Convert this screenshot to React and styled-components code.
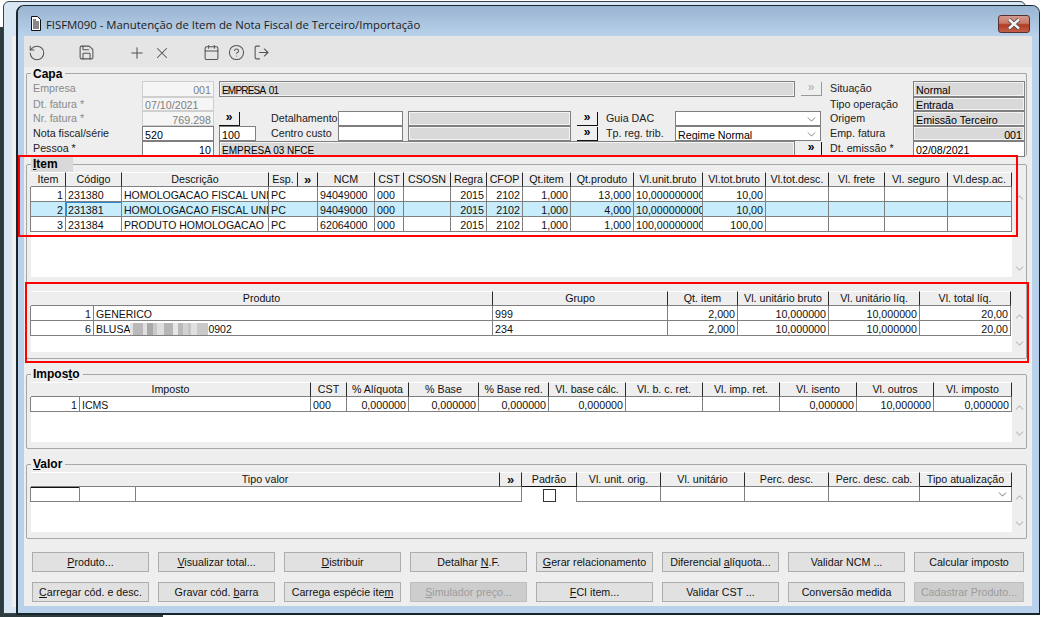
import React from 'react';
import styled, { createGlobalStyle } from 'styled-components';
import { RotateCcw, Save, Plus, X, Calendar, CircleHelp, LogOut, ChevronUp, ChevronDown } from 'lucide-react';

const GlobalStyle = createGlobalStyle`
  html, body {
    margin: 0;
    padding: 0;
    background: #fff;
    overflow: hidden;
  }
  * {
    box-sizing: border-box;
  }
`;

const Desktop = styled.div`
  position: relative;
  width: 1044px;
  height: 617px;
  overflow: hidden;
  font-family: "Liberation Sans", Arial, sans-serif;
  font-size: 10.7px;
  color: #111;
  background: #fff;
`;

const DarkStrip = styled.div`
  position: absolute;
  left: 0;
  top: 27px;
  width: 163px;
  height: 590px;
  background: #2e3b3f;
`;

const BackWindow = styled.div`
  position: absolute;
  left: 3px;
  top: 1px;
  width: 1023px;
  height: 613px;
  padding: 34px 0 6px 8px;
  background: #d9e6f3;
  border: 1px solid #3a4347;
  border-radius: 6px 6px 0 0;
`;

const BackInner = styled.div`
  height: 100%;
  background: #efefef;
`;

const Window = styled.div`
  position: absolute;
  left: 16px;
  top: 5px;
  width: 1024px;
  height: 610px;
  display: flex;
  flex-direction: column;
  padding: 0 7px 7px 6px;
  background: #b9d1ea;
  border: 1px solid #16262c;
  border-left-width: 2px;
  border-bottom-width: 2px;
  border-radius: 8px 8px 0 0;
`;

const TitleBar = styled.div`
  flex: 0 0 30px;
  margin: 0 -7px 0 -6px;
  padding: 5px 9px 0 12px;
  display: flex;
  align-items: center;
  background: linear-gradient(#99b4d1, #b9d1ea);
  border-radius: 7px 7px 0 0;
`;

const TitleText = styled.div`
  margin: 2px 0 0 4px;
  font-family: "Open Sans", sans-serif;
  font-size: 11.35px;
  color: #1a1a1a;
  flex: 1;
`;

const CloseButton = styled.div`
  width: 32px;
  height: 18px;
  display: flex;
  align-items: center;
  justify-content: center;
  background: linear-gradient(#d39a8e 0%, #c9786a 45%, #b23a22 55%, #c2604a 100%);
  border: 1px solid #55302f;
  border-radius: 3px;
`;

const Toolbar = styled.div`
  flex: 0 0 31px;
  display: flex;
  align-items: center;
  gap: 25px;
  padding-top: 2px;
  background: #e5e5e5;
`;

const ToolGroup = styled.div`
  display: flex;
`;

const ToolButton = styled.div`
  width: 25px;
  display: flex;
  justify-content: center;
  color: #555;
`;

const Content = styled.div`
  flex: 1;
  padding: 0 5px 0 2px;
  background: #eee;
`;

const Group = styled.fieldset`
  margin: ${p => p.$top || 0}px 0 0;
  padding: 0 0 ${p => p.$bottom ?? 6}px 3px;
  min-width: 0;
  height: ${p => (p.$height ? `${p.$height}px` : 'auto')};
  border: 1px solid #a6a6a6;
  border-bottom: ${p => (p.$open ? '0' : '1px solid #a6a6a6')};
  border-radius: 2px;
`;

const GroupTitle = styled.legend`
  margin-left: 1px;
  padding: 0 3px 0 2px;
  height: ${p => p.$h || 16}px;
  line-height: ${p => (p.$h ? p.$h + 2 : 16)}px;
  font-size: 12px;
  font-weight: bold;
  color: #000;
  background: ${p => (p.$active ? '#d9d9d9' : 'transparent')};
  width: ${p => (p.$active ? '42px' : 'auto')};
`;

const CapaGrid = styled.div`
  display: grid;
  margin-top: 2px;
  grid-template-columns: 112px 72px 5px 37px 15px 67px 65px 5px 163px 6px 20px 9px 69px 120px 6px 20px 9px 83px 112px;
  grid-template-rows: 16px 14px 15px 15px 16px;
`;

const Label = styled.div`
  grid-column: ${p => p.$col};
  padding-left: ${p => (p.$col === '1 / 2' ? '3px' : '0')};
  line-height: 15px;
  white-space: nowrap;
  color: ${p => (p.$dim ? '#8a8a8a' : '#222')};
`;

const fieldSkins = {
  white: 'background: #fff; border: 1px solid #7f7f7f; color: #000;',
  readonly: 'background: #f5f5f5; border: 1px solid #cfcfcf; color: #808080;',
  gray: 'background: #d9d9d9; border: 1px solid #808080; box-shadow: inset 0 0 0 1px #f3f3f3; color: #000;',
};

const Field = styled.div`
  grid-column: ${p => p.$col};
  display: flex;
  align-items: center;
  justify-content: ${p => (p.$right ? 'flex-end' : 'space-between')};
  padding: 2px 2px 0 2px;
  overflow: hidden;
  white-space: pre;
  ${p => p.$caps && 'font-size: 10px;'}
  letter-spacing: ${p => p.$tight || 0}px;
  word-spacing: ${p => (p.$tight ? 2 : 0)}px;
  ${p => fieldSkins[p.$skin || 'white']}
`;

const MoreButton = styled.div`
  grid-column: ${p => p.$col};
  width: 21px;
  height: 14px;
  margin-top: 1px;
  display: flex;
  align-items: center;
  justify-content: center;
  font-weight: bold;
  font-size: 12px;
  line-height: 11px;
  padding-bottom: 2px;
  background: #efefef;
  color: ${p => (p.$off ? '#bbb' : '#000')};
  border-right: 1px solid ${p => (p.$off ? '#999' : '#111')};
  border-bottom: 1px solid ${p => (p.$off ? '#999' : '#111')};
`;

const Pane = styled.div`
  display: flex;
  height: ${p => p.$h}px;
  margin-top: ${p => p.$top || 0}px;
`;

const TableBox = styled.div`
  width: 982px;
  display: flex;
  flex-direction: column;
`;

const Filler = styled.div`
  flex: 1;
  margin-left: 1px;
  background: #fff;
`;

const Scroller = styled.div`
  width: 14px;
  padding: 19px 0 2px;
  display: flex;
  flex-direction: column;
  justify-content: space-between;
  align-items: center;
  color: #bfbfbf;
`;

const Row = styled.div`
  display: grid;
  grid-template-columns: ${p => p.$cols};
  border-left: 1px solid ${p => (p.$head ? 'transparent' : '#808080')};
  background: ${p => (p.$selected ? '#c7ecfb' : p.$head ? 'transparent' : '#fff')};
`;

const HeadCell = styled.div`
  grid-column: span ${p => p.$span || 1};
  height: 15px;
  line-height: 13px;
  text-align: center;
  white-space: nowrap;
  overflow: hidden;
  font-size: ${p => (p.$more ? '13px' : 'inherit')};
  font-weight: ${p => (p.$more ? 'bold' : 'normal')};
  background: #eee;
  border-top: 1px solid #fff;
  border-right: 1px solid #2a2a2a;
  border-bottom: 1px solid ${p => (p.$dark ? '#111' : '#808080')};
`;

const Cell = styled.div`
  grid-column: span ${p => p.$span || 1};
  height: 15px;
  padding: 1px 2px 0;
  line-height: 14px;
  display: flex;
  align-items: center;
  justify-content: ${p => (p.$right ? 'flex-end' : p.$center ? 'center' : 'flex-start')};
  white-space: nowrap;
  overflow: hidden;
  font-size: ${p => (p.$caps ? '10.5px' : 'inherit')};
  border-right: 1px solid #808080;
  border-bottom: ${p => (p.$noLine ? '0' : '1px solid #808080')};
  box-shadow: ${p => p.$focus || 'none'};
`;

const Check = styled.span`
  width: 13px;
  height: 13px;
  background: #fff;
  border: 1px solid #333;
`;

const BlurPiece = styled.span`
  display: inline-block;
  width: ${p => p.$w}px;
  height: 12px;
  background: ${p => p.$c};
`;

const ButtonGrid = styled.div`
  display: grid;
  grid-template-columns: repeat(7, 117px) 110px;
  grid-auto-rows: 20px;
  column-gap: 9px;
  row-gap: 10px;
  margin-top: 13px;
  padding-left: 6px;
`;

const ActionButton = styled.div`
  display: flex;
  align-items: center;
  justify-content: center;
  white-space: nowrap;
  background: ${p => (p.$disabled ? '#cdcdcd' : '#e1e1e1')};
  color: ${p => (p.$disabled ? '#9c9c9c' : '#111')};
  border: 1px solid ${p => (p.$disabled ? '#bdbdbd' : '#adadad')};
`;

const Highlight = styled.div`
  position: absolute;
  left: ${p => p.$x}px;
  top: ${p => p.$y}px;
  width: ${p => p.$w}px;
  height: ${p => p.$h}px;
  border: 2px solid #f00;
  pointer-events: none;
`;

const cols = list => list.map(w => `${w}px`).join(' ');
const R = v => ({ v, right: true });

const BLUR = [
  [3, '#e2e2e2'], [10, '#b9b9b9'], [4, '#e0e0e0'], [6, '#a9a9a9'], [4, '#c9c9c9'], [7, '#dedede'],
  [9, '#b5b5b5'], [5, '#e6e6e6'], [5, '#b9b9b9'], [5, '#d2d2d2'], [3, '#c5c5c5'], [6, '#e0e0e0'], [11, '#c9c9c9'],
];

const ITEM_COLS = cols([35, 56, 147, 29, 20, 57, 29, 47, 36, 36, 48, 63, 69, 63, 63, 56, 63, 64]);
const PRODUTO_COLS = cols([63, 399, 175, 70, 91, 91, 91]);
const IMPOSTO_COLS = cols([49, 231, 36, 62, 70, 70, 77, 77, 77, 77, 77, 78]);
const VALOR_COLS = cols([49, 56, 364, 22, 55, 84, 84, 84, 91, 92]);

const itemRow = (n, code, desc, ncm, unit, total, prod, focus) => [
  R(n),
  { v: code, focus },
  { v: desc, caps: true },
  { v: 'PC', span: 2 },
  { v: ncm },
  { v: '000' },
  { v: '' },
  R('2015'),
  R('2102'),
  R('1,000'),
  R(prod),
  { v: unit },
  R(total),
  { v: '' }, { v: '' }, { v: '' }, { v: '' },
];

const ITEM_ROWS = [
  itemRow('1', '231380', 'HOMOLOGACAO FISCAL UNI', '94049000', '10,000000000', '10,00', '13,000'),
  itemRow('2', '231381', 'HOMOLOGACAO FISCAL UNI', '94049000', '10,000000000', '10,00', '4,000', 'inset 1px 1px 0 #2f86c9'),
  itemRow('3', '231384', 'PRODUTO HOMOLOGACAO', '62064000', '100,00000000', '100,00', '1,000'),
];

const productName = (
  <>
    BLUSA
    {BLUR.map(([w, c], i) => <BlurPiece key={i} $w={w} $c={c} />)}
    0902
  </>
);

const PRODUTO_ROWS = [
  [R('1'), { v: 'GENERICO', caps: true }, { v: '999' }, R('2,000'), R('10,000000'), R('10,000000'), R('20,00')],
  [R('6'), { v: productName, caps: true }, { v: '234' }, R('2,000'), R('10,000000'), R('10,000000'), R('20,00')],
];

const IMPOSTO_ROWS = [
  [R('1'), { v: 'ICMS', caps: true }, { v: '000' }, R('0,000000'), R('0,000000'), R('0,000000'), R('0,000000'), { v: '' }, { v: '' }, R('0,000000'), R('10,000000'), R('0,000000')],
];

const VALOR_ROWS = [
  [
    { v: '', focus: 'inset 0 1px 0 #111' },
    { v: '' },
    { v: '', span: 2 },
    { v: <Check />, center: true, noLine: true },
    { v: '' }, { v: '' }, { v: '' }, { v: '' },
    { v: <ChevronDown size={13} strokeWidth={1.5} color="#555" />, right: true },
  ],
];

function DataTable({ columns, head, rows, selected, height, top }) {
  return (
    <Pane $h={height} $top={top}>
      <TableBox>
        <Row $cols={columns} $head>
          {head.map((h, i) => (
            <HeadCell key={i} $span={h.span} $dark={h.dark} $more={h === '»'}>{h.label ?? h}</HeadCell>
          ))}
        </Row>
        {rows.map((row, r) => (
          <Row key={r} $cols={columns} $selected={r === selected}>
            {row.map((c, i) => (
              <Cell key={i} $span={c.span} $right={c.right} $center={c.center} $noLine={c.noLine} $focus={c.focus} $caps={c.caps}>
                {c.v}
              </Cell>
            ))}
          </Row>
        ))}
        <Filler />
      </TableBox>
      <Scroller>
        <ChevronUp size={13} strokeWidth={2} />
        <ChevronDown size={13} strokeWidth={2} />
      </Scroller>
    </Pane>
  );
}

function DocIcon() {
  return (
    <svg width="12" height="15" viewBox="0 0 12 15">
      <path d="M1.5 .5h6l3 3v11h-9z" fill="#fff" stroke="#111" />
      <path d="M3 4h3M3 6h6M3 8h6M3 10h6M3 12h6" stroke="#111" strokeWidth="1" />
    </svg>
  );
}

function CloseIcon() {
  return (
    <svg width="16" height="12" viewBox="0 0 16 12">
      <path d="M3 1.5 13 10.5M13 1.5 3 10.5" stroke="#4a4a4a" strokeWidth="4" />
      <path d="M3 1.5 13 10.5M13 1.5 3 10.5" stroke="#f4f4f4" strokeWidth="2.4" />
    </svg>
  );
}

const BUTTONS = [
  [<span><u>P</u>roduto...</span>], [<span><u>V</u>isualizar total...</span>], [<span><u>D</u>istribuir</span>], [<span>Detalhar <u>N</u>.F.</span>],
  [<span><u>G</u>erar relacionamento</span>], [<span>Diferencial <u>a</u>líquota...</span>], ['Validar NCM ...'], ['Calcular imposto'],
  [<span><u>C</u>arregar cód. e desc.</span>], [<span>Gravar cód. <u>b</u>arra</span>], [<span>Carrega espécie ite<u>m</u></span>], [<span><u>S</u>imulador preço...</span>, true],
  [<span><u>F</u>CI item...</span>], ['Validar CST ...'], ['Conversão medida'], ['Cadastrar Produto...', true],
];

export default function App() {
  return (
    <Desktop>
      <GlobalStyle />
      <DarkStrip />
      <BackWindow><BackInner /></BackWindow>
      <Window>
        <TitleBar>
          <DocIcon />
          <TitleText>FISFM090 - Manutenção de Item de Nota Fiscal de Terceiro/Importação</TitleText>
          <CloseButton><CloseIcon /></CloseButton>
        </TitleBar>
        <Toolbar>
          <ToolGroup><ToolButton><RotateCcw size={18} strokeWidth={1.4} /></ToolButton></ToolGroup>
          <ToolGroup><ToolButton><Save size={17} strokeWidth={1.5} /></ToolButton></ToolGroup>
          <ToolGroup>
            <ToolButton><Plus size={18} strokeWidth={1.4} /></ToolButton>
            <ToolButton><X size={18} strokeWidth={1.4} /></ToolButton>
          </ToolGroup>
          <ToolGroup>
            <ToolButton><Calendar size={17} strokeWidth={1.5} /></ToolButton>
            <ToolButton><CircleHelp size={17} strokeWidth={1.5} /></ToolButton>
            <ToolButton><LogOut size={17} strokeWidth={1.5} /></ToolButton>
          </ToolGroup>
        </Toolbar>
        <Content>
          <Group $height={89} $open>
            <GroupTitle $h={12}>Capa</GroupTitle>
            <CapaGrid>
              <Label $col="1 / 2" $dim>Empresa</Label>
              <Field $col="2 / 3" $skin="readonly" $right>001</Field>
              <Field $col="4 / 15" $skin="gray" $caps $tight={-0.8}>EMPRESA 01</Field>
              <MoreButton $col="16 / 17" $off>»</MoreButton>
              <Label $col="18 / 19">Situação</Label>
              <Field $col="19 / 20" $skin="gray">Normal</Field>

              <Label $col="1 / 2" $dim>Dt. fatura *</Label>
              <Field $col="2 / 3" $skin="readonly">07/10/2021</Field>
              <Label $col="18 / 19">Tipo operação</Label>
              <Field $col="19 / 20" $skin="gray">Entrada</Field>

              <Label $col="1 / 2" $dim>Nr. fatura *</Label>
              <Field $col="2 / 3" $skin="readonly" $right>769.298</Field>
              <MoreButton $col="4 / 5">»</MoreButton>
              <Label $col="6 / 7">Detalhamento</Label>
              <Field $col="7 / 8" />
              <Field $col="9 / 10" $skin="gray" />
              <MoreButton $col="11 / 12">»</MoreButton>
              <Label $col="13 / 14">Guia DAC</Label>
              <Field $col="14 / 17"><span /><ChevronDown size={13} strokeWidth={1.5} color="#666" /></Field>
              <Label $col="18 / 19">Origem</Label>
              <Field $col="19 / 20" $skin="gray">Emissão Terceiro</Field>

              <Label $col="1 / 2">Nota fiscal/série</Label>
              <Field $col="2 / 3">520</Field>
              <Field $col="4 / 5">100</Field>
              <Label $col="6 / 7">Centro custo</Label>
              <Field $col="7 / 8" />
              <Field $col="9 / 10" $skin="gray" />
              <MoreButton $col="11 / 12">»</MoreButton>
              <Label $col="13 / 14">Tp. reg. trib.</Label>
              <Field $col="14 / 17">Regime Normal<ChevronDown size={13} strokeWidth={1.5} color="#666" /></Field>
              <Label $col="18 / 19">Emp. fatura</Label>
              <Field $col="19 / 20" $skin="gray" $right>001</Field>

              <Label $col="1 / 2">Pessoa *</Label>
              <Field $col="2 / 3" $right>10</Field>
              <Field $col="4 / 15" $skin="gray" $caps>EMPRESA 03 NFCE</Field>
              <MoreButton $col="16 / 17">»</MoreButton>
              <Label $col="18 / 19">Dt. emissão *</Label>
              <Field $col="19 / 20">02/08/2021</Field>
            </CapaGrid>
          </Group>

          <Group>
            <GroupTitle $active><u>I</u>tem</GroupTitle>
            <DataTable
              height={105}
              columns={ITEM_COLS}
              selected={1}
              head={['Item', 'Código', 'Descrição', 'Esp.', '»', 'NCM', 'CST', 'CSOSN', 'Regra', 'CFOP', 'Qt.item', 'Qt.produto', 'Vl.unit.bruto', 'Vl.tot.bruto', 'Vl.tot.desc.', 'Vl. frete', 'Vl. seguro', 'Vl.desp.ac.']}
              rows={ITEM_ROWS}
            />
            <DataTable
              height={61}
              top={14}
              columns={PRODUTO_COLS}
              head={[{ label: 'Produto', span: 2 }, 'Grupo', 'Qt. item', 'Vl. unitário bruto', 'Vl. unitário líq.', 'Vl. total líq.']}
              rows={PRODUTO_ROWS}
            />
          </Group>

          <Group $top={7}>
            <GroupTitle>Impos<u>t</u>o</GroupTitle>
            <DataTable
              height={60}
              columns={IMPOSTO_COLS}
              head={[{ label: 'Imposto', span: 2 }, 'CST', '% Alíquota', '% Base', '% Base red.', 'Vl. base cálc.', 'Vl. b. c. ret.', 'Vl. imp. ret.', 'Vl. isento', 'Vl. outros', 'Vl. imposto']}
              rows={IMPOSTO_ROWS}
            />
          </Group>

          <Group $top={7}>
            <GroupTitle><u>V</u>alor</GroupTitle>
            <DataTable
              height={60}
              columns={VALOR_COLS}
              head={[{ label: 'Tipo valor', span: 3 }, '»', { label: 'Padrão', dark: true }, 'Vl. unit. orig.', 'Vl. unitário', 'Perc. desc.', 'Perc. desc. cab.', { label: 'Tipo atualização', dark: true }]}
              rows={VALOR_ROWS}
            />
          </Group>

          <ButtonGrid>
            {BUTTONS.map(([label, disabled], i) => (
              <ActionButton key={i} $disabled={disabled}>{label}</ActionButton>
            ))}
          </ButtonGrid>
        </Content>
      </Window>
      <Highlight $x={18} $y={155} $w={1000} $h={82} />
      <Highlight $x={25} $y={282} $w={1004} $h={81} />
    </Desktop>
  );
}
